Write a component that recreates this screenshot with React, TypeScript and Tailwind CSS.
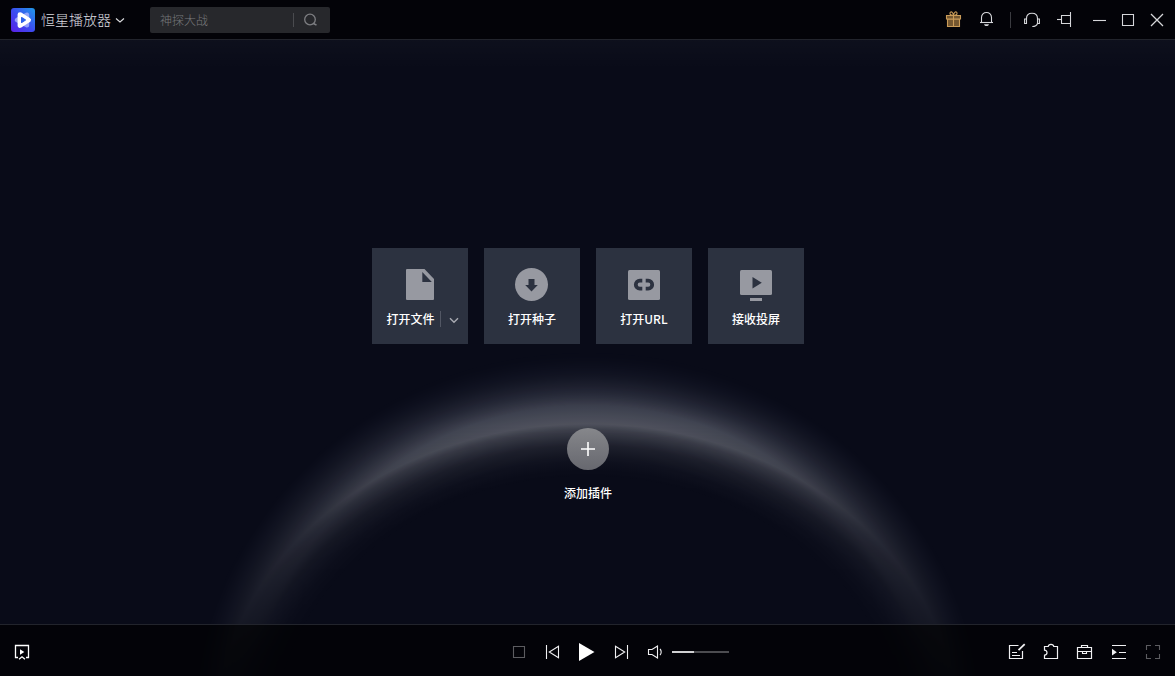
import React, { useState } from 'react'

type IconProps = {
  children: React.ReactNode
  className?: string
}

// 18px line icon, shared by the title bar and the control bar
const Icon = ({ children, className = 'text-[#d6d7da]' }: IconProps) => (
  <svg
    viewBox="0 0 18 18"
    className={`size-[18px] block ${className}`}
    fill="none"
    stroke="currentColor"
    strokeWidth="1.1"
    aria-hidden="true"
  >
    {children}
  </svg>
)

const IconButton = ({ label, children }: { label: string; children: React.ReactNode }) => (
  <button type="button" aria-label={label} title={label} className="shrink-0 cursor-pointer">
    {children}
  </button>
)

const CardIcon = ({ children }: { children: React.ReactNode }) => (
  <svg viewBox="0 0 36 36" className="size-9 block text-[#9799a1]" fill="currentColor" aria-hidden="true">
    {children}
  </svg>
)

const Logo = () => (
  <svg viewBox="0 0 24 24" className="size-6 block" aria-hidden="true">
    <defs>
      <linearGradient id="logo-bg" x1="0" y1="1" x2="1" y2="0">
        <stop offset="0" stopColor="#5a1fe6" />
        <stop offset="0.5" stopColor="#3b4df0" />
        <stop offset="1" stopColor="#1f9be8" />
      </linearGradient>
    </defs>
    <rect width="24" height="24" rx="3" fill="url(#logo-bg)" />
    <path
      d="M16 6.8V17.2L6 12Z"
      fill="#a9b4ff"
      stroke="#a9b4ff"
      strokeWidth="4.4"
      strokeLinejoin="round"
      opacity="0.8"
    />
    <path d="M9 6.6L17.6 12L9 17.4Z" fill="#fff" stroke="#fff" strokeWidth="4.8" strokeLinejoin="round" />
    <path d="M10.6 9.6L14.4 12L10.6 14.4Z" fill="#2d62ea" stroke="#2d62ea" strokeWidth="1.2" strokeLinejoin="round" />
  </svg>
)

const TitleBar = () => {
  const [keyword, setKeyword] = useState('')

  return (
    <header className="relative h-10 pt-px pl-[11px] pr-[9px] flex items-center justify-between bg-black/65 border-b border-[#22242c]">
      <div className="flex items-center">
        <Logo />
        <button type="button" className="ml-1.5 mb-0.5 flex items-center gap-1 text-sm leading-5 font-light text-[#dcdde0] cursor-pointer">
          恒星播放器
          <svg viewBox="0 0 10 10" className="size-2.5 block mt-0.5" fill="none" stroke="currentColor" strokeWidth="1.1" aria-hidden="true">
            <path d="M1 3.5L5 7L9 3.5" />
          </svg>
        </button>
        <form
          role="search"
          onSubmit={(e) => e.preventDefault()}
          className="ml-[25px] w-[180px] h-[26px] flex items-center bg-[#27282c] rounded-xs"
        >
          <input
            type="text"
            aria-label="搜索"
            value={keyword}
            onChange={(e) => setKeyword(e.target.value)}
            placeholder="神探大战"
            className="min-w-0 flex-1 pl-2.5 text-xs leading-4 font-light text-gray-200 placeholder:text-[#77787b] outline-none"
          />
          <span className="w-px h-3.5 bg-[#4a4b4f]" />
          <button type="submit" aria-label="搜索" className="w-9 pl-[9px] cursor-pointer">
            <Icon className="text-[#7d7e82]">
              <circle cx="7" cy="8.5" r="5.3" strokeWidth="1.3" />
              <path d="M10.5 12.5L13.5 14.2" strokeWidth="1.5" />
            </Icon>
          </button>
        </form>
      </div>

      <div className="flex items-center">
        <div className="flex items-center gap-[15px]">
          <IconButton label="礼物">
            <Icon className="text-[#c99b58]">
              <path d="M2.5 8H14.5V15.5H2.5Z" fill="#745730" />
              <path d="M1.5 4.5H15.5V8H1.5Z" fill="#745730" />
              <path d="M8.5 4.5V15.5" />
              <path d="M8.5 4.5C6.5 4.5 4.5 3.5 5 1.8C5.6 0 8 0.8 8.5 4.5C9 0.8 11.4 0 12 1.8C12.5 3.5 10.5 4.5 8.5 4.5Z" />
            </Icon>
          </IconButton>
          <IconButton label="消息">
            <Icon>
              <path d="M2 11.5H15" />
              <path d="M3.5 11.5V6.5C3.5 3.4 5.7 1.5 8.5 1.5C11.3 1.5 13.5 3.4 13.5 6.5V11.5" />
              <path d="M6 13.2H11C10.6 14.6 9.7 15 8.5 15C7.3 15 6.4 14.6 6 13.2Z" fill="currentColor" stroke="none" />
            </Icon>
          </IconButton>
        </div>
        <span className="ml-3.5 mr-3 w-px h-4 bg-[#3a3b40]" />
        <div className="flex items-center gap-[15px]">
          <IconButton label="客服">
            <Icon>
              <path d="M3.5 8.5V7.5C3.5 4.3 5.8 2.2 9 2.2C12.2 2.2 14.5 4.3 14.5 7.5V8.5" />
              <path d="M3.5 8H1.6V12.5H3.5Z" />
              <path d="M14.5 8H16.4V12.5H14.5Z" />
              <path d="M14.5 12.5C13.8 14.5 12 15.5 9.3 15.5" />
            </Icon>
          </IconButton>
          <IconButton label="置顶">
            <Icon>
              <path d="M1 8.5H5.5" />
              <path d="M14.5 4.5H5.5V12.5H14.5" />
              <path d="M14.5 1V16" />
            </Icon>
          </IconButton>
        </div>
        <div className="ml-4 flex items-center gap-[11px]">
          <IconButton label="最小化">
            <Icon>
              <path d="M3 9.5H16" />
            </Icon>
          </IconButton>
          <IconButton label="最大化">
            <Icon>
              <path d="M3.5 3.5H14.5V14.5H3.5Z" />
            </Icon>
          </IconButton>
          <IconButton label="关闭">
            <Icon>
              <path d="M3 3L15 15M15 3L3 15" strokeWidth="1.3" />
            </Icon>
          </IconButton>
        </div>
      </div>
    </header>
  )
}

const cardClass = 'size-24 pt-[18px] flex flex-col items-center gap-[9px] bg-[#2c3240] text-xs leading-4 font-medium text-white'

const OpenCards = () => (
  <div className="flex gap-4">
    <div className={cardClass}>
      <CardIcon>
        <path d="M5 3H22.5L32 13V33Q32 34 31 34H5Q4 34 4 33V4Q4 3 5 3Z" />
        <path d="M20.3 6V16H29.8Z" fill="#2c3240" />
      </CardIcon>
      <div className="flex items-center pl-[5px]">
        <button type="button" className="cursor-pointer">打开文件</button>
        <span className="ml-[5px] mr-2 w-px h-4 bg-[#525764]" />
        <button type="button" aria-label="更多打开方式" className="mt-0.5 cursor-pointer">
          <svg viewBox="0 0 10 10" className="size-2.5 block" fill="none" stroke="#a9abb2" strokeWidth="1.4" aria-hidden="true">
            <path d="M1 3.2L5 7.2L9 3.2" />
          </svg>
        </button>
      </div>
    </div>
    <button type="button" className={`${cardClass} cursor-pointer`}>
      <CardIcon>
        <circle cx="17.5" cy="18.5" r="16.5" />
        <path d="M14.5 13H20.5V19H23.8L17.5 25.5L11.2 19H14.5Z" fill="#2c3240" />
      </CardIcon>
      打开种子
    </button>
    <button type="button" className={`${cardClass} cursor-pointer`}>
      <CardIcon>
        <rect x="2" y="4" width="32" height="30" rx="1.5" />
        <path
          d="M16.3 14.7H13.8A4 4 0 0 0 13.8 22.7H16.3M19.7 14.7H22.2A4 4 0 0 1 22.2 22.7H19.7"
          fill="none"
          stroke="#2c3240"
          strokeWidth="3.8"
        />
      </CardIcon>
      打开URL
    </button>
    <button type="button" className={`${cardClass} cursor-pointer`}>
      <CardIcon>
        <rect x="2" y="4" width="32" height="25" rx="1.5" />
        <rect x="12" y="32" width="12" height="3" />
        <path d="M14.5 11L23.8 16.7L14.5 22.5Z" fill="#2c3240" />
      </CardIcon>
      接收投屏
    </button>
  </div>
)

const ControlBar = () => {
  const [volume, setVolume] = useState(39)

  return (
    <footer className="relative h-[52px] pt-[3px] px-[13px] grid grid-cols-[1fr_auto_1fr] items-center bg-black/65 border-t border-[#22242c]">
      <div className="flex items-center justify-between pr-[13px]">
        <IconButton label="投屏播放">
          <Icon className="text-white">
            <path d="M5 14.5H2.5V2.5H15.5V14.5H13" strokeWidth="1.3" />
            <path d="M7 6.2L11.3 9L7 11.8Z" fill="currentColor" stroke="none" />
            <path d="M6 16.2L9 13.8L12 16.2" strokeWidth="1.3" />
          </Icon>
        </IconButton>
        <div className="flex items-center gap-4">
          <IconButton label="停止">
            <Icon className="text-[#5c5c60]">
              <path d="M3.5 3.5H14.5V14.5H3.5Z" />
            </Icon>
          </IconButton>
          <IconButton label="上一个">
            <Icon className="text-[#f0f0f2]">
              <path d="M2.5 2V16" />
              <path d="M14.5 3.3V14.7L5.3 9Z" />
            </Icon>
          </IconButton>
        </div>
      </div>

      <button type="button" aria-label="播放" className="cursor-pointer">
        <svg viewBox="0 0 25 24" className="w-[25px] h-6 block" fill="#fff" aria-hidden="true">
          <path d="M4 3L19.5 12L4 21Z" />
        </svg>
      </button>

      <div className="flex items-center justify-between pl-[13px]">
        <div className="flex items-center">
          <IconButton label="下一个">
            <Icon className="text-[#f0f0f2]">
              <path d="M2.5 3.3V14.7L11.7 9Z" />
              <path d="M14.5 2V16" />
            </Icon>
          </IconButton>
          <div className="ml-4 mr-[7px] flex">
            <IconButton label="静音">
              <Icon className="text-[#f0f0f2]">
                <path d="M1.5 6.5H5L10.5 3V15L5 11.5H1.5Z" />
                <path d="M13 6C14.6 7.6 14.6 10.4 13 12" />
              </Icon>
            </IconButton>
          </div>
          <input
            type="range"
            aria-label="音量"
            min={0}
            max={100}
            value={volume}
            onChange={(e) => setVolume(Number(e.target.value))}
            className="w-[57px] h-0.5 appearance-none cursor-pointer [&::-webkit-slider-thumb]:appearance-none [&::-webkit-slider-thumb]:size-0"
            style={{ background: `linear-gradient(to right, #d0d0d2 ${volume}%, #4c4c50 ${volume}%)` }}
          />
        </div>
        <div className="flex items-center gap-4">
          <IconButton label="字幕编辑">
            <Icon className="text-[#f0f0f2]">
              <path d="M10.5 2.5H1.5V15.5H14.5V8" strokeWidth="1.2" />
              <path d="M16.7 1.2L10.5 7.2" strokeWidth="1.8" />
              <path d="M4 9.5H9M4 12.5H12" />
            </Icon>
          </IconButton>
          <IconButton label="插件">
            <Icon className="text-[#f0f0f2]">
              <path d="M2.5 3.5H6.2C6.4 2.1 7.5 1.4 9 1.4C10.5 1.4 11.6 2.1 11.8 3.5H15.5V15.5H2.5V12.2C4 12 5 11.1 5 9.7C5 8.3 4 7.4 2.5 7.2Z" strokeWidth="1.2" />
            </Icon>
          </IconButton>
          <IconButton label="工具箱">
            <Icon className="text-[#f0f0f2]">
              <path d="M1.5 4.5H15.5V15.5H1.5Z" strokeWidth="1.2" />
              <path d="M5.5 4.5V2.5H11.5V4.5" strokeWidth="1.2" />
              <path d="M1.5 8.5H15.5M6.5 8.5V10.5H10.5V8.5" />
            </Icon>
          </IconButton>
          <IconButton label="播放列表">
            <Icon className="text-[#f0f0f2]">
              <path d="M2 2.5H16M9 9.5H16M2 15.5H16" strokeWidth="1.2" />
              <path d="M2 5.8L6.8 9.2L2 12.6Z" fill="currentColor" stroke="none" />
            </Icon>
          </IconButton>
          <IconButton label="全屏">
            <Icon className="text-[#5c5c60]">
              <path d="M7 2.5H2.5V7M11 2.5H15.5V7M7 15.5H2.5V11M11 15.5H15.5V11" />
            </Icon>
          </IconButton>
        </div>
      </div>
    </footer>
  )
}

// Soft arc of light: the ellipse is the bright rim, the masks thin it out towards both ends
const Horizon = () => (
  <div className="pointer-events-none absolute inset-0 bg-[radial-gradient(373px_313px_at_50%_109%,transparent_83%,#f4f8ff08_88%,#f4f8ff18_93%,#f4f8ff38_98%,#f4f8ff4c_100%,#ecf2ff44_103%,#dfe7ff30_109%,#ccd6ff1a_116%,transparent_125%)] mask-[radial-gradient(circle_at_50%_111%,#000_345px,#00000080_372px,transparent_402px),linear-gradient(to_bottom,#000_63%,#000000cc_70%,#0000008c_81%,#00000060_92%,#00000040_100%)] mask-intersect" />
)

const App = () => {
  return (
    <div className="relative min-h-screen flex flex-col overflow-hidden bg-[#090b18] font-['Noto_Sans_CJK_SC','Liberation_Sans',sans-serif] select-none">
      <Horizon />
      <TitleBar />
      <main className="relative flex-1 pt-52 pl-px flex flex-col items-center bg-linear-to-b from-white/2 to-transparent to-5%">
        <OpenCards />
        <button type="button" className="mt-[84px] flex flex-col items-center gap-[15px] text-xs leading-4 font-medium text-white cursor-pointer">
          <span className="size-[42px] rounded-full bg-linear-to-b from-[#86878b] to-[#67686f] flex items-center justify-center">
            <svg viewBox="0 0 14 14" className="size-3.5 block" stroke="#fff" strokeWidth="1.6" aria-hidden="true">
              <path d="M7 0V14M0 7H14" />
            </svg>
          </span>
          添加插件
        </button>
      </main>
      <ControlBar />
    </div>
  )
}

export default App
